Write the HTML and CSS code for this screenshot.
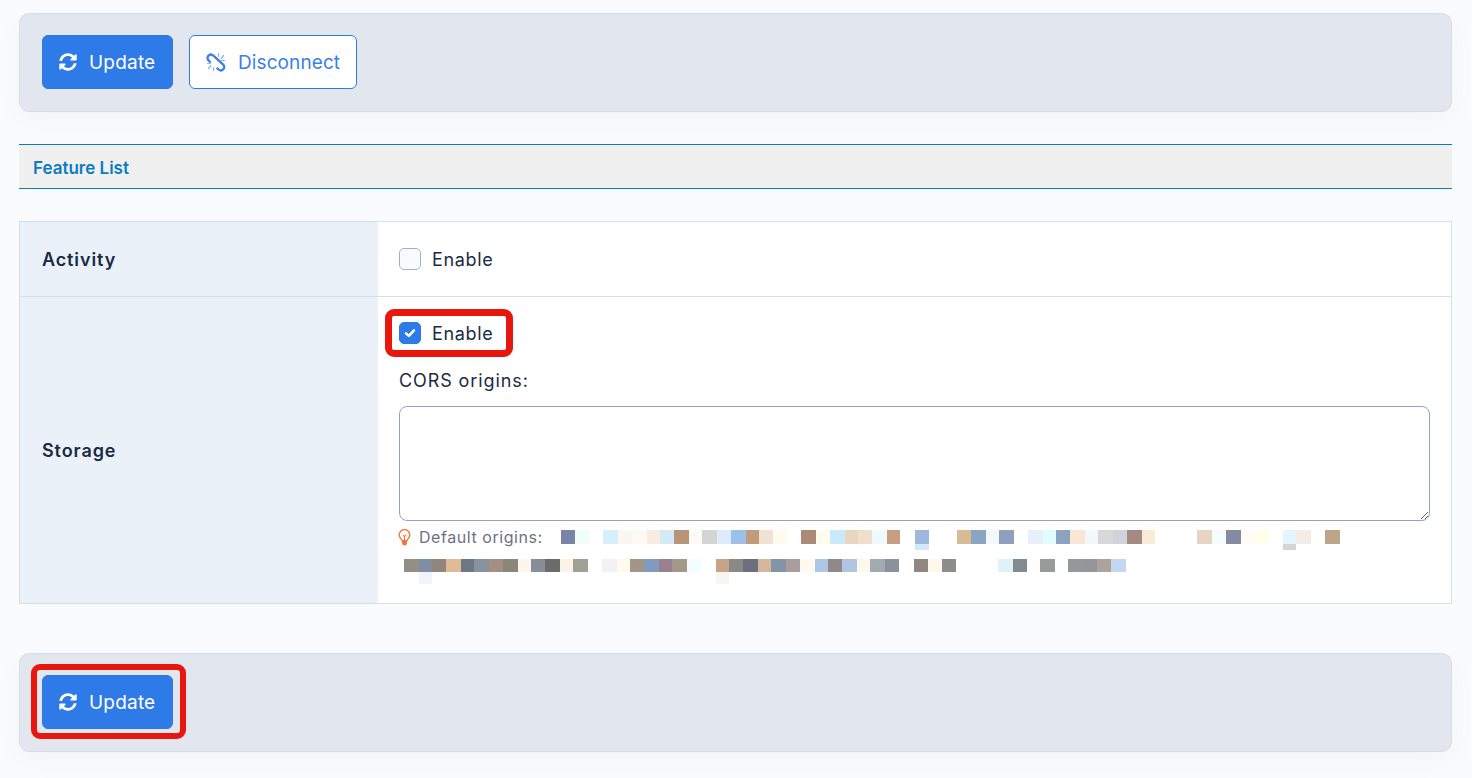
FILE: index.html
```html
<!DOCTYPE html>
<html lang="en">
<head>
<meta charset="utf-8">
<title>Feature List</title>
<link rel="stylesheet" href="styles.css">
</head>
<body>
<div class="panel">
  <button class="btn btn-primary" type="button">
    <svg class="icon" viewBox="0 0 512 512"><path fill="currentColor" d="M370.72 133.28C339.458 104.008 298.888 87.962 255.848 88c-77.458.068-144.328 53.178-162.791 126.85-1.344 5.363-6.122 9.15-11.651 9.15H24.103c-7.498 0-13.194-6.807-11.807-14.176C33.933 94.924 134.813 8 256 8c66.448 0 126.791 26.136 171.315 68.685L463.03 40.97C478.149 25.851 504 36.559 504 57.941V192c0 13.255-10.745 24-24 24H345.941c-21.382 0-32.09-25.851-16.971-40.971l41.75-41.749zM32 296h134.059c21.382 0 32.09 25.851 16.971 40.971l-41.75 41.75c31.262 29.273 71.835 45.319 114.876 45.28 77.418-.07 144.315-53.144 162.787-126.849 1.344-5.363 6.122-9.15 11.651-9.15h57.304c7.498 0 13.194 6.807 11.807 14.176C478.067 417.076 377.187 504 256 504c-66.448 0-126.791-26.136-171.315-68.685L48.97 471.03C33.851 486.149 8 475.441 8 454.059V320c0-13.255 10.745-24 24-24z"/></svg>
    <span class="btn-text">Update</span>
  </button>
  <button class="btn btn-outline" type="button">
    <svg class="icon icon-unlink" viewBox="0 0 20 20" fill="none" stroke="currentColor" stroke-width="2.300" stroke-linecap="round" stroke-linejoin="round"><path d="M3.800 9.800 2.500 8.400a3.300 3.300 0 0 1 .2-4.900 3.400 3.400 0 0 1 4.700.2l9.800 8.900a3.300 3.300 0 0 1 .1 4.700 3.400 3.400 0 0 1-4.700.2l-1.300-1.100"/><path class="ray" d="M12.500 4.500V1.500M15 6.500 17.500 3.500M15.500 8.500H18.500M7.500 15.500V18.500M5 13.500 2.500 16.500M4.500 11.500H1.500"/></svg>
    <span class="btn-text btn-text-tight">Disconnect</span>
  </button>
</div>

<h2 class="section-title">Feature List</h2>

<div class="features">
  <div class="feature-label">Activity</div>
  <div class="feature-body feature-body-single">
    <label class="check"><span class="box"></span><span>Enable</span></label>
  </div>
  <div class="feature-label feature-label-last">Storage</div>
  <div class="feature-body feature-body-last">
    <label class="check"><span class="box box-on"><svg viewBox="0 0 12 12" fill="none" stroke="#fff" stroke-width="2.200" stroke-linecap="round" stroke-linejoin="round"><path d="M2.600 6.300 5 8.500 9.400 3.800"/></svg></span><span>Enable</span></label>
    <div class="field-label">CORS origins:</div>
    <textarea class="origins" aria-label="CORS origins"></textarea>
    <div class="hint hint-first">
      <svg class="bulb" viewBox="0 0 12 16"><path fill="none" stroke="#f4753a" stroke-width="1.300" d="M3.800 11.200C3.600 9.600 1 8.400 1 5.600a5 5 0 0 1 10 0c0 2.800-2.600 4-2.800 5.600z"/><path fill="#f4753a" d="M3.700 10.400h4.600V13a2.300 2.600 0 0 1-4.600 0z"/><path fill="none" stroke="#f4753a" stroke-width="1" d="M4.500 5.500 6 7.300l1.500-1.800M6 7.300v3"/></svg>
      <span class="hint-text">Default origins:</span>
      <div class="mosaic mosaic-a"></div>
    </div>
    <div class="mosaic mosaic-b"></div>
  </div>
</div>

<div class="panel panel-bottom">
  <button class="btn btn-primary" type="button">
    <svg class="icon" viewBox="0 0 512 512"><path fill="currentColor" d="M370.72 133.28C339.458 104.008 298.888 87.962 255.848 88c-77.458.068-144.328 53.178-162.791 126.85-1.344 5.363-6.122 9.15-11.651 9.15H24.103c-7.498 0-13.194-6.807-11.807-14.176C33.933 94.924 134.813 8 256 8c66.448 0 126.791 26.136 171.315 68.685L463.03 40.97C478.149 25.851 504 36.559 504 57.941V192c0 13.255-10.745 24-24 24H345.941c-21.382 0-32.09-25.851-16.971-40.971l41.75-41.749zM32 296h134.059c21.382 0 32.09 25.851 16.971 40.971l-41.75 41.75c31.262 29.273 71.835 45.319 114.876 45.28 77.418-.07 144.315-53.144 162.787-126.849 1.344-5.363 6.122-9.15 11.651-9.15h57.304c7.498 0 13.194 6.807 11.807 14.176C478.067 417.076 377.187 504 256 504c-66.448 0-126.791-26.136-171.315-68.685L48.97 471.03C33.851 486.149 8 475.441 8 454.059V320c0-13.255 10.745-24 24-24z"/></svg>
    <span class="btn-text">Update</span>
  </button>
</div>

<div class="mark mark-enable"></div>
<div class="mark mark-update"></div>
</body>
</html>
```
FILE: styles.css
```css
* { box-sizing: border-box; }
html, body { height: 100%; }
body {
  margin: 0;
  padding: 13px 20px 0 19px;
  background: #fafbfd;
  font-family: "Inter", "Liberation Sans", sans-serif;
  color: #1a2b42;
  overflow: hidden;
  position: relative;
}
.panel {
  display: flex;
  align-items: flex-start;
  gap: 16px;
  height: 99px;
  padding: 21px 22px 0;
  background: #e2e6ee;
  border: 1px solid #d6dee9;
  border-radius: 10px;
  box-shadow: 0 8px 24px rgba(120, 130, 160, 0.06);
}
.panel-bottom { margin-top: 49px; }
.btn {
  display: inline-flex;
  align-items: center;
  gap: 12px;
  height: 54px;
  padding: 0 16px;
  border-radius: 6px;
  font: 400 19px "Inter", "Liberation Sans", sans-serif;
  letter-spacing: 0.2px;
  cursor: pointer;
}
.btn-text { padding-top: 1px; }
.btn-text-tight { letter-spacing: 0.1px; }
.btn-primary { width: 131px; background: #2e7ae6; border: 1px solid #2e7ae6; color: #fff; }
.btn-outline { width: 168px; background: #fff; border: 1px solid #2e7ae6; color: #3b7fe6; }
.icon { width: 18px; height: 18px; flex: none; }
.icon-unlink { width: 20px; height: 20px; }
.ray { stroke-width: 1.200; stroke: #8db2f0; }
.section-title {
  display: flex;
  align-items: center;
  height: 45px;
  margin: 32px 0;
  padding: 2px 14px 0;
  background: #f0f0f0;
  border-top: 1px solid #0a7cc0;
  border-bottom: 1px solid #0a7cc0;
  color: #0a7cc0;
  font-size: 17px;
  font-weight: 600;
}
.features {
  display: grid;
  grid-template-columns: 358px 1fr;
  grid-template-rows: 75px 306px;
  background: #fff;
  border: 1px solid #d6dee9;
}
.feature-label {
  display: flex;
  align-items: center;
  padding-left: 22px;
  background: #ebf1f9;
  border-bottom: 1px solid #d6dee9;
  font-size: 18px;
  font-weight: 600;
  letter-spacing: 0.9px;
}
.feature-label-last { border-bottom: 0; }
.feature-body { padding: 0 21px; border-bottom: 1px solid #d6dee9; }
.feature-body-single { display: flex; align-items: center; }
.feature-body-last { border-bottom: 0; padding-top: 25px; }
.check { display: flex; align-items: center; gap: 11px; font-size: 18px; letter-spacing: 0.65px; height: 22px; }
.box {
  width: 22px;
  height: 22px;
  background: #f9fbfe;
  border: 1px solid #9db1cf;
  border-radius: 5px;
}
.box-on { background: #2e7ae6; border-color: #2e7ae6; display: flex; align-items: center; justify-content: center; }
.box-on svg { width: 14px; height: 14px; }
.field-label { margin-top: 25px; font-size: 18px; line-height: 24px; letter-spacing: 0.9px; }
.origins {
  display: block;
  width: 100%;
  height: 115px;
  margin-top: 13px;
  background: #fff;
  border: 1px solid #8ea5c9;
  border-radius: 8px;
  outline: 0;
}
.hint {
  display: flex;
  align-items: center;
  color: #6b7280;
  font-size: 16px;
  letter-spacing: 0.55px;
}
.hint-first { height: 24px; margin-top: 4px; }
.bulb { width: 13px; height: 17px; flex: none; margin-left: -1px; }
.hint-text { width: 150px; padding-left: 8px; flex: none; }
.mosaic { flex: none; background-repeat: no-repeat; }
.mosaic-a {
  width: 779px;
  height: 26px;
  margin-top: 12px;
  background-image:
    linear-gradient(to right, transparent 722px, #d8d4d0 722px, #d8d4d0 735px, transparent 735px),
    linear-gradient(to right, transparent 354px, #d5e8fb 354px, #d5e8fb 368px, transparent 368px),
    linear-gradient(to right,
      #7a84a8 0 14px, #f0fdf9 14px 29px, #fff 29px 42px, #d5f0fc 42px 57px, #faf6f0 57px 71px, #fef9f5 71px 86px,
      #f8ece0 86px 99px, #d5eaf3 99px 113px, #b89478 113px 128px, #fdf9f6 128px 141px, #d4d4d4 141px 156px,
      #ddebfb 156px 170px, #9cc0ea 170px 185px, #c09c7a 185px 198px, #f2e2d6 198px 212px, #fffbee 212px 227px,
      #fff 227px 240px, #ab8b76 240px 255px, #fffcee 255px 269px, #c8ebfb 269px 284px, #ead5bf 284px 297px,
      #f0dfcd 297px 311px, #f0fafc 311px 326px, #c89e80 326px 339px, #fff 339px 354px, #9db8dd 354px 368px,
      #fff 368px 396px, #d5bc94 396px 410px, #8aa4c4 410px 425px, #f2f9fd 425px 438px, #8fa0bf 438px 453px,
      #fff 453px 467px, #e6f0fb 467px 482px, #e0fdfd 482px 495px, #8ba3c0 495px 509px, #f8e6d6 509px 524px,
      #f2f9fc 524px 537px, #d8d8d8 537px 552px, #d0d3dc 552px 566px, #a48a80 566px 581px, #f8ecd6 581px 594px,
      #fff 594px 636px, #e8d4c2 636px 651px, #f4fcfd 651px 665px, #848aa2 665px 680px, #fffcf6 680px 694px,
      #ffffea 694px 708px, #fff 708px 722px, #e5f5fd 722px 735px, #f4ede6 735px 750px, #fff 750px 764px,
      #bea488 764px 779px);
  background-size: 100% 6px, 100% 6px, 100% 14px;
  background-position: 0 14px, 0 14px, 0 0;
}
.mosaic-b {
  width: 722px;
  height: 25px;
  margin: 10px 0 0 5px;
  background-image:
    linear-gradient(to right, transparent 15px, #f2f2f9 15px, #f2f2f9 28px, transparent 28px, transparent 312px, #faf5f2 312px, #faf5f2 325px, transparent 325px),
    linear-gradient(to right,
      #948f84 0 15px, #7f8ea3 15px 28px, #90857f 28px 42px, #e0bc94 42px 57px, #6c7788 57px 70px, #87929f 70px 85px,
      #a49082 85px 99px, #8a867a 99px 114px, #fdf5ee 114px 127px, #878d99 127px 141px, #6b6b6b 141px 156px,
      #fbf3ea 156px 169px, #a0a094 169px 184px, #fff 184px 198px, #f2f1f6 198px 213px, #fefbee 213px 226px,
      #a29688 226px 240px, #829ac0 240px 255px, #9a808e 255px 268px, #a4988a 268px 283px, #f2fefe 283px 297px,
      #fff 297px 312px, #c9a386 312px 325px, #8a8888 325px 339px, #6d6e7e 339px 354px, #d5b89c 354px 367px,
      #8295a6 367px 382px, #ab9c9e 382px 396px, #fefaee 396px 411px, #adc7e4 411px 424px, #908889 424px 438px,
      #b0c5e2 438px 453px, #fef8ea 453px 466px, #a0acb2 466px 481px, #8a929c 481px 495px, #fff 495px 510px,
      #918680 510px 524px, #fff7ea 524px 538px, #8d8d8c 538px 552px, #fff 552px 594px, #def2f8 594px 609px,
      #818b92 609px 623px, #fffefa 623px 636px, #959c9a 636px 651px, #fff 651px 664px, #949898 664px 678px,
      #96959a 678px 693px, #aca49c 693px 707px, #c2d8f2 707px 722px);
  background-size: 100% 12px, 100% 13px;
  background-position: 0 13px, 0 0;
}
.mark {
  position: absolute;
  border-style: solid;
  border-color: #e8170d;
  filter: blur(0.5px);
  pointer-events: none;
}
.mark-enable { left: 385px; top: 309px; width: 128px; height: 48px; border-width: 7px; border-radius: 9px; }
.mark-update { left: 31px; top: 664px; width: 155px; height: 75px; border-width: 6px; border-radius: 9px; }
```
